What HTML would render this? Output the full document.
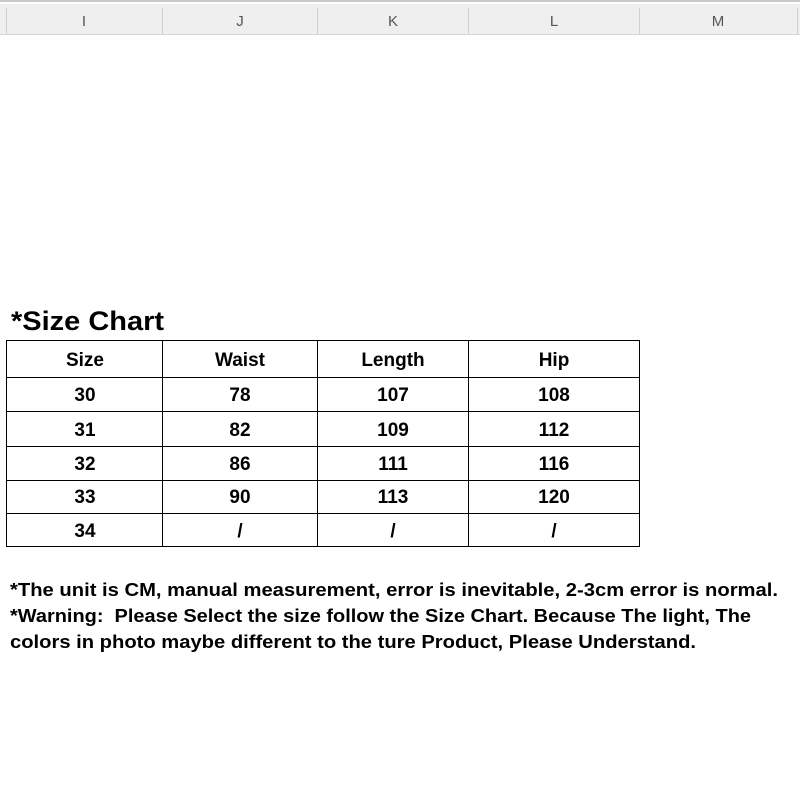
<!DOCTYPE html>
<html><head><meta charset="utf-8"><style>
html,body{margin:0;padding:0;background:#fff;width:800px;height:800px;overflow:hidden}
svg{display:block}
text{font-family:"Liberation Sans",sans-serif;font-weight:bold;fill:#000}
</style></head><body>
<svg width="800" height="800" viewBox="0 0 800 800">
<rect x="0" y="0" width="800" height="800" fill="#fff"/>
<rect x="0" y="0" width="800" height="2" fill="#c8c8c8"/>
<rect x="0" y="4" width="800" height="30" fill="#efefef"/>
<rect x="0" y="34" width="800" height="1" fill="#d4d4d4"/>
<g stroke="#d0d0d0" stroke-width="1">
<line x1="6.5" y1="8" x2="6.5" y2="34"/>
<line x1="162.5" y1="8" x2="162.5" y2="34"/>
<line x1="317.5" y1="8" x2="317.5" y2="34"/>
<line x1="468.5" y1="8" x2="468.5" y2="34"/>
<line x1="639.5" y1="8" x2="639.5" y2="34"/>
<line x1="797.5" y1="8" x2="797.5" y2="34"/>
</g>
<g style="font-weight:normal" font-size="15" text-anchor="middle">
<text x="84" y="26" style="font-weight:normal;fill:#555">I</text>
<text x="240" y="26" style="font-weight:normal;fill:#555">J</text>
<text x="393" y="26" style="font-weight:normal;fill:#555">K</text>
<text x="554" y="26" style="font-weight:normal;fill:#555">L</text>
<text x="718" y="26" style="font-weight:normal;fill:#555">M</text>
</g>
<text x="11" y="330" font-size="27" textLength="153" lengthAdjust="spacingAndGlyphs">*Size Chart</text>
<g stroke="#000" stroke-width="1" fill="none">
<rect x="6.5" y="340.5" width="633" height="206"/>
<line x1="162.5" y1="340" x2="162.5" y2="547"/>
<line x1="317.5" y1="340" x2="317.5" y2="547"/>
<line x1="468.5" y1="340" x2="468.5" y2="547"/>
<line x1="6" y1="377.5" x2="640" y2="377.5"/>
<line x1="6" y1="411.5" x2="640" y2="411.5"/>
<line x1="6" y1="446.5" x2="640" y2="446.5"/>
<line x1="6" y1="480.5" x2="640" y2="480.5"/>
<line x1="6" y1="513.5" x2="640" y2="513.5"/>
</g>
<g font-size="19" text-anchor="middle">
<text x="85" y="366">Size</text><text x="240" y="366">Waist</text><text x="393" y="366">Length</text><text x="554" y="366">Hip</text>
<text x="85" y="401">30</text><text x="240" y="401">78</text><text x="393" y="401">107</text><text x="554" y="401">108</text>
<text x="85" y="436">31</text><text x="240" y="436">82</text><text x="393" y="436">109</text><text x="554" y="436">112</text>
<text x="85" y="470">32</text><text x="240" y="470">86</text><text x="393" y="470">111</text><text x="554" y="470">116</text>
<text x="85" y="503">33</text><text x="240" y="503">90</text><text x="393" y="503">113</text><text x="554" y="503">120</text>
<text x="85" y="537">34</text><text x="240" y="537">/</text><text x="393" y="537">/</text><text x="554" y="537">/</text>
</g>
<g font-size="18">
<text x="10" y="596" textLength="768" lengthAdjust="spacingAndGlyphs">*The unit is CM, manual measurement, error is inevitable, 2-3cm error is normal.</text>
<text x="10" y="622" textLength="741" lengthAdjust="spacingAndGlyphs" xml:space="preserve">*Warning:  Please Select the size follow the Size Chart. Because The light, The</text>
<text x="10" y="648" textLength="686" lengthAdjust="spacingAndGlyphs">colors in photo maybe different to the ture Product, Please Understand.</text>
</g>
</svg>
</body></html>
